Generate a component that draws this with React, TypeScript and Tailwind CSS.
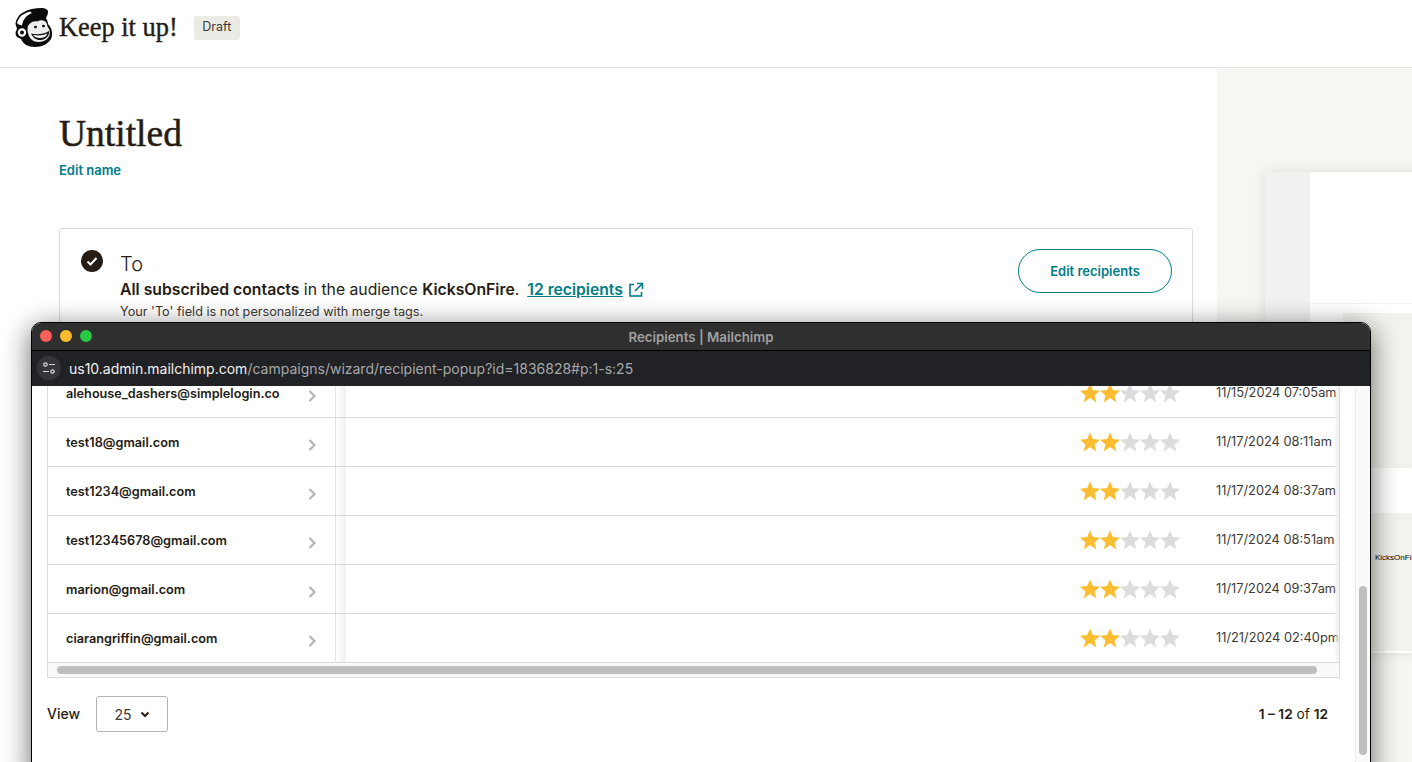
import React from "react";

const rows = [
  ["alehouse_dashers@simplelogin.co", "11/15/2024 07:05am"],
  ["test18@gmail.com", "11/17/2024 08:11am"],
  ["test1234@gmail.com", "11/17/2024 08:37am"],
  ["test12345678@gmail.com", "11/17/2024 08:51am"],
  ["marion@gmail.com", "11/17/2024 09:37am"],
  ["ciarangriffin@gmail.com", "11/21/2024 02:40pm"],
];

function Star({ on }: { on: boolean }) {
  return (
    <svg width="20" height="20" viewBox="0 0 20 20" className="shrink-0">
      <path
        d="M10 .5l2.9 6.6 7.1.6-5.4 4.7 1.7 7L10 15l-6.3 4.4 1.7-7L0 7.7l7.1-.6z"
        fill={on ? "#fdbd31" : "#dcdcdc"}
      />
    </svg>
  );
}

function Logo() {
  return (
    <svg width="38" height="39" viewBox="0 0 38 39" className="shrink-0">
      <path d="M.5 16C1 11 4 6 9 4c5-3 11-4 17-4 4 0 7 1 7 4 0 2-1 4-2 6 1 2 2 4 2 6 2 2 4 5 4 9 0 2 0 4-1 6-3 5-9 8-16 8-7 0-12-3-14-8-1-1-3-1-4-2-2-2-2-5 0-8L.5 16z" fill="#0b0b0b" />
      <path d="M2 15C3 11 6 7 10 5.500c1-.5 3-1.500 5-2l2 1.500C12 7 8 11 7 17.500 5.500 17 3 16.500 2 15z" fill="#fff" />
      <path d="M12.500 21c0-5 5-8.500 10-7.500 3-2 7.500-1.500 9 1.500.8 2 .8 3 1.500 4.500 1.500 1.500 2 4 1.800 6.500-.8 5-5.800 8-11.300 8-5.500 0-9-3.500-10-7.500-.5-1.500-1-3-1-5.500z" fill="#eee" />
      <path d="M16 25.500c5 1.500 13 1 18-2.500.8 4-2.500 8.500-8.500 9-4 .3-8-2.500-9.500-6.500z" fill="#111" />
      <path d="M18 27c5 1 11 .5 14.500-1.500-1 3-4 4.500-7.500 4.500-3 0-5.500-1-7-3z" fill="#fff" />
      <circle cx="7" cy="24.500" r="4.200" fill="#fff" />
      <circle cx="7" cy="24.500" r="2" fill="#0b0b0b" />
      <ellipse cx="20.500" cy="19" rx="1.500" ry="1.200" fill="#111" />
      <ellipse cx="28.500" cy="18" rx="1.500" ry="1.200" fill="#111" />
    </svg>
  );
}

export default function App() {
  return (
    <div
      className="relative h-[762px] w-[1412px] overflow-hidden bg-white text-[#241c15]"
      style={{ fontFamily: '"Liberation Sans", Arial, sans-serif' }}
    >
      <header className="flex h-[68px] items-center border-b border-[#e2e2e0] pb-[12px] pl-[15px]">
        <Logo />
        <span className="ml-[6px] font-['Liberation_Serif',serif] text-[26.4px] leading-none [-webkit-text-stroke:0.4px_#241c15]">Keep it up!</span>
        <span className="ml-[16px] flex h-[24px] w-[46px] items-center justify-center rounded-[3px] bg-[#ebebe6] font-['Inter',sans-serif] text-[12.5px] text-[#3d3934]">Draft</span>
      </header>

      <div className="flex h-[694px]">
        <main className="w-[1217px] shrink-0 pl-[59px] pt-[45px]">
          <h1 className="font-['Liberation_Serif',serif] text-[37.5px] leading-[42px] [-webkit-text-stroke:0.5px_#241c15]">Untitled</h1>
          <a className="mt-[5px] block font-['Inter',sans-serif] text-[13px] font-semibold leading-[20px] text-[#007c89]">Edit name</a>
          <section className="mt-[48px] flex h-[200px] w-[1134px] items-start rounded-[3px] border border-[#dcdcdc] pl-[21px] pr-[20px] pt-[20px]">
            <svg width="22" height="22" viewBox="0 0 22 22" className="mt-[1px] shrink-0">
              <circle cx="11" cy="11" r="11" fill="#241c15" />
              <path d="M6.500 11.500l3 3 6-6.500" stroke="#fff" strokeWidth="2" fill="none" />
            </svg>
            <div className="ml-[17px] mt-[1px] min-w-0 flex-1 font-['Inter',sans-serif]">
              <p className="text-[20px] font-light leading-[28px]">To</p>
              <p className="text-[15.75px] leading-[23px]">
                <b className="font-semibold">All subscribed contacts</b> in the audience <b className="font-semibold">KicksOnFire</b>.
                <a className="ml-[8px] text-[15.7px] font-semibold text-[#007c89] underline">12 recipients</a>
                <svg width="16" height="16" viewBox="0 0 16 16" fill="none" stroke="#007c89" strokeWidth="1.600" className="ml-[5px] inline-block align-[-3px]">
                  <path d="M6 2.500H2v11.500h11.500V10M9 1.500h5.500V7M14 2L7 9" />
                </svg>
              </p>
              <p className="mt-[2px] text-[12.7px] leading-[18px] text-[#3d3934]">Your 'To' field is not personalized with merge tags.</p>
            </div>
            <button className="flex h-[44px] w-[154px] shrink-0 items-center justify-center rounded-full border border-[#007c89] pt-[1px] font-['Inter',sans-serif] text-[13px] font-semibold text-[#007c89]">Edit recipients</button>
          </section>
        </main>

        <aside className="w-[195px] shrink-0 overflow-hidden bg-[#f6f6f3] pl-[48px] pt-[104px]">
          <div className="flex h-[481px] w-[300px] bg-white shadow-[0_0_12px_rgba(0,0,0,0.1)]">
            <div className="w-[45px] shrink-0 bg-[#f1f1f2]" />
            <div className="flex flex-1 flex-col">
              <div className="h-[132px] shrink-0 border-b border-[#f2f2f0]" />
              <div className="flex flex-1 flex-col pl-[33px] pt-[9px]">
                <div className="h-[155px] bg-[#f2f2ee]" />
                <div className="h-[45px] bg-white" />
                <div className="h-[138px] bg-[#f2f2ee] pl-[32px] pt-[39px] font-['Liberation_Sans',sans-serif] text-[8px] text-black">KicksOnFire</div>
              </div>
            </div>
          </div>
        </aside>
      </div>

      <div className="absolute left-[31px] top-[322px] flex h-[460px] w-[1340px] flex-col overflow-hidden rounded-t-[10px] border border-black bg-white font-['Inter',sans-serif] shadow-[0_6px_28px_rgba(0,0,0,0.6)]">
        <div className="relative flex h-[28px] shrink-0 items-center justify-center border-b border-black bg-[#2f2f2f] pt-[2px] text-[13.3px] font-semibold text-[#a0a0a0]">
          <span className="absolute left-[8px] top-[7px] flex gap-[8px]">
            <i className="h-[12px] w-[12px] rounded-full bg-[#fe5f57]" />
            <i className="h-[12px] w-[12px] rounded-full bg-[#febc2e]" />
            <i className="h-[12px] w-[12px] rounded-full bg-[#28c840]" />
          </span>
          Recipients | Mailchimp
        </div>
        <div className="flex h-[35px] shrink-0 items-center bg-[#212226] pb-[1px] pl-[5px] text-[14px]">
          <span className="flex h-[24px] w-[24px] items-center justify-center rounded-full bg-[#34363b]">
            <svg width="14" height="14" viewBox="0 0 14 14" fill="none" stroke="#d6d6d8" strokeWidth="1.200">
              <circle cx="3.500" cy="3.500" r="1.700" />
              <path d="M7 3.500h6M1 10.500h6" />
              <circle cx="10.500" cy="10.500" r="1.700" />
            </svg>
          </span>
          <span className="ml-[8px] text-[#f1f1f1]">us10.admin.mailchimp.com</span>
          <span className="text-[#a8a8aa]">/campaigns/wizard/recipient-popup?id=1836828#p:1-s:25</span>
        </div>
        <div className="flex min-h-0 flex-1">
          <div className="w-[1323px] shrink-0 pl-[15px]">
            <div className="relative w-[1293px] overflow-hidden border border-t-0 border-[#dcdcdc]">
              <div className="absolute bottom-[15px] right-0 top-0 w-[5px] bg-linear-to-r from-transparent to-[#eeeeee]" />
              {rows.map((r, i) => (
                <div key={r[0]} className={`flex h-[49px] items-center border-b border-[#d9d9d9] ${i === 0 ? "-mt-[17px]" : ""}`}>
                  <div className="flex h-full w-[288px] shrink-0 items-center justify-between border-r border-[#e4e4e4] pl-[18px] pr-[18px]">
                    <span className="mt-[1px] text-[12.7px] font-semibold">{r[0]}</span>
                    <svg width="9" height="12" viewBox="0 0 9 12" fill="none" stroke="#b4b4b4" strokeWidth="2.200" className="mt-[6px]">
                      <path d="M1.500 1l5 5-5 5" />
                    </svg>
                  </div>
                  <div className="h-full w-[10px] shrink-0 bg-linear-to-r from-white to-[#f0f0f0]" />
                  <div className="flex flex-1 justify-end">
                    <div className="flex">
                      {[0, 1, 2, 3, 4].map((n) => <Star key={n} on={n < 2} />)}
                    </div>
                    <div className="ml-[36px] w-[123px] whitespace-nowrap text-[12.8px] leading-[20px] text-[#3d3934]">{r[1]}</div>
                  </div>
                </div>
              ))}
              <div className="flex h-[14px] items-center bg-[#f9f9f9] pl-[9px]">
                <div className="h-[8px] w-[1260px] rounded-full bg-[#bfbfbf]" />
              </div>
            </div>
            <div className="mt-[18px] flex w-[1293px] items-center text-[14px]">
              <span className="-mt-[2px] font-medium">View</span>
              <div className="ml-[16px] flex h-[36px] w-[72px] items-center justify-center gap-[8px] rounded-[3px] border border-[#b5b5b5] text-[#3d3934]">
                25
                <svg width="10" height="7" viewBox="0 0 10 7" fill="none" stroke="#241c15" strokeWidth="2"><path d="M1.500 1.500L5 5l3.500-3.500" /></svg>
              </div>
              <span className="ml-auto pr-[12px] text-[13.7px]"><b className="font-semibold">1 – 12</b> of <b className="font-semibold">12</b></span>
            </div>
          </div>
          <div className="flex-1 border-l border-[#ececec] bg-[#fafafa] pl-[3px] pt-[200px]">
            <div className="h-[169px] w-[8px] rounded-full bg-[#bfbfbf]" />
          </div>
        </div>
      </div>
    </div>
  );
}
